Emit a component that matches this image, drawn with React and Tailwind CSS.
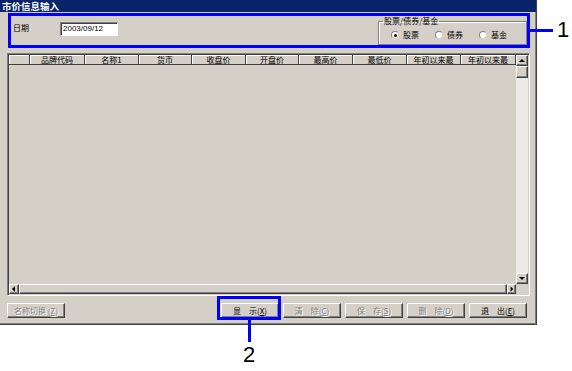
import React from 'react';

const FONT = { fontFamily: '"Noto Sans CJK SC", "Noto Sans", sans-serif' };

const columns = [
  { label: '', w: 'w-[21px]' },
  { label: '品牌代码', w: 'w-[55px]' },
  { label: '名称1', w: 'w-[54px]' },
  { label: '货币', w: 'w-[53px]' },
  { label: '收盘价', w: 'w-[54px]' },
  { label: '开盘价', w: 'w-[53px]' },
  { label: '最高价', w: 'w-[54px]' },
  { label: '最低价', w: 'w-[54px]' },
  { label: '年初以来最', w: 'w-[54px]' },
  { label: '年初以来最', w: 'w-[55px]' },
];

const Arrow = ({ dir }) => {
  const pts = {
    up: '1,5 4,2 7,5',
    down: '1,2 4,5 7,2',
    left: '5,1 2,4 5,7',
    right: '3,1 6,4 3,7',
  }[dir];
  return (
    <svg width="8" height="8" viewBox="0 0 8 8">
      <polygon points={pts} fill="#000" />
    </svg>
  );
};

const ScrollBtn = ({ dir, className }) => (
  <div
    className={`flex items-center justify-center bg-[#d4d0c8] border border-t-white border-l-white border-r-[#404040] border-b-[#404040] shadow-[inset_-1px_-1px_0_#808080] ${className}`}
  >
    <Arrow dir={dir} />
  </div>
);

const Button = ({ cn, letter, disabled }) => (
  <div
    className={`w-[58px] h-[15px] flex items-center justify-center bg-[#d4d0c8] border border-t-white border-l-white border-r-[#404040] border-b-[#404040] shadow-[inset_-1px_-1px_0_#808080] text-[8px] leading-[10px] whitespace-pre ${
      disabled ? 'text-[#808080] [text-shadow:1px_1px_0_#fff]' : 'text-black'
    }`}
  >
    {cn}(<span className="underline">{letter}</span>)
  </div>
);

const Radio = ({ label, checked }) => (
  <div className="flex items-center gap-[4px]">
    <div className="w-[8px] h-[8px] rounded-full bg-white border border-t-[#808080] border-l-[#808080] border-r-[#d4d0c8] border-b-[#d4d0c8] flex items-center justify-center">
      {checked && <div className="w-[3px] h-[3px] rounded-full bg-black" />}
    </div>
    <span className="text-[8px] leading-[10px] text-black">{label}</span>
  </div>
);

export default function App() {
  return (
    <div className="relative w-[572px] h-[371px] bg-white overflow-hidden" style={FONT}>
      {/* window */}
      <div className="w-[537px] h-[325px] bg-[#d4d0c8] border-r border-b border-[#404040] shadow-[inset_-1px_-1px_0_#808080] flex flex-col">
        <div className="h-[12px] bg-[#0a246a] flex items-center pl-[2px]">
          <span className="text-white font-bold text-[9.5px] leading-[12px]">市价信息输入</span>
        </div>

        {/* top panel */}
        <div className="h-[41px] flex items-start pl-[13px] pr-[9px]">
          <div className="flex items-start mt-[10px]">
            <span className="w-[47px] text-[8px] leading-[12px] text-black">日期</span>
            <div className="w-[58px] h-[14px] bg-white border border-t-[#808080] border-l-[#808080] border-r-white border-b-white shadow-[inset_1px_1px_0_#404040] flex items-center pl-[2px]">
              <span className="text-[8px] leading-[10px] text-black" style={{ fontFamily: '"Liberation Sans", sans-serif' }}>
                2003/09/12
              </span>
            </div>
          </div>
          <fieldset className="ml-auto mt-[3px] w-[149px] h-[30px] border border-[#808080] shadow-[inset_1px_1px_0_#fff,1px_1px_0_#fff] pl-[12px]">
            <legend className="ml-[-8px] px-[1px] text-[8px] leading-[12px] text-black">股票/债券/基金</legend>
            <div className="flex items-center gap-[16px] mt-[3px]">
              <Radio label="股票" checked />
              <Radio label="债券" />
              <Radio label="基金" />
            </div>
          </fieldset>
        </div>

        {/* grid */}
        <div className="ml-[7px] w-[523px] h-[243px] border border-t-[#808080] border-l-[#808080] border-r-white border-b-white shadow-[inset_1px_1px_0_#404040] p-px flex flex-col">
          <div className="flex flex-1 min-h-0">
            <div className="flex-1 flex flex-col">
              <div className="flex h-[10px]">
                {columns.map((c, i) => (
                  <div
                    key={i}
                    className={`${c.w} h-[10px] border-r border-b border-[#404040] shadow-[inset_1px_1px_0_#fff] flex items-center justify-center text-[8px] leading-[10px] text-black whitespace-nowrap overflow-hidden`}
                  >
                    {c.label}
                  </div>
                ))}
              </div>
              <div className="flex-1 bg-[#d4d0c8]" />
            </div>
            <div className="w-[12px] flex flex-col bg-[#eceae6]">
              <ScrollBtn dir="up" className="h-[11px]" />
              <div className="h-[12px] bg-[#d4d0c8] border border-t-white border-l-white border-r-[#404040] border-b-[#404040] shadow-[inset_-1px_-1px_0_#808080]" />
              <div className="flex-1" />
              <ScrollBtn dir="down" className="h-[11px]" />
            </div>
          </div>
          <div className="flex h-[10px]">
            <ScrollBtn dir="left" className="w-[10px]" />
            <div className="flex-1 bg-[#d4d0c8] border border-t-white border-l-white border-r-[#404040] border-b-[#404040] shadow-[inset_-1px_-1px_0_#808080]" />
            <ScrollBtn dir="right" className="w-[9px]" />
            <div className="w-[12px] bg-[#d4d0c8]" />
          </div>
        </div>

        {/* buttons */}
        <div className="mt-[7px] flex justify-between pl-[7px] pr-[9px]">
          <Button cn="名称切换 " letter="Z" disabled />
          <div className="flex gap-[4px]">
            <Button cn="显　示" letter="X" />
            <Button cn="清　除" letter="C" disabled />
            <Button cn="保　存" letter="S" disabled />
            <Button cn="删　除" letter="D" disabled />
            <Button cn="退　出" letter="E" />
          </div>
        </div>
      </div>

      {/* callout 1 */}
      <div className="absolute left-[8px] top-[13px] w-[522px] h-[35px] border-[3px] border-[#0000ff]" />
      <div className="absolute left-[530px] top-[29px] w-[23px] h-[3px] bg-[#0000ff]" />
      <div
        className="absolute left-[557px] top-[19px] text-[22px] leading-none text-black"
        style={{ fontFamily: '"Liberation Sans", sans-serif' }}
      >
        1
      </div>

      {/* callout 2 */}
      <div className="absolute left-[217px] top-[296px] w-[64px] h-[24px] border-[3px] border-[#0000ff]" />
      <div className="absolute left-[248px] top-[320px] w-[3px] h-[22px] bg-[#0000ff]" />
      <div
        className="absolute left-[243px] top-[344px] text-[22px] leading-none text-black"
        style={{ fontFamily: '"Liberation Sans", sans-serif' }}
      >
        2
      </div>
    </div>
  );
}
